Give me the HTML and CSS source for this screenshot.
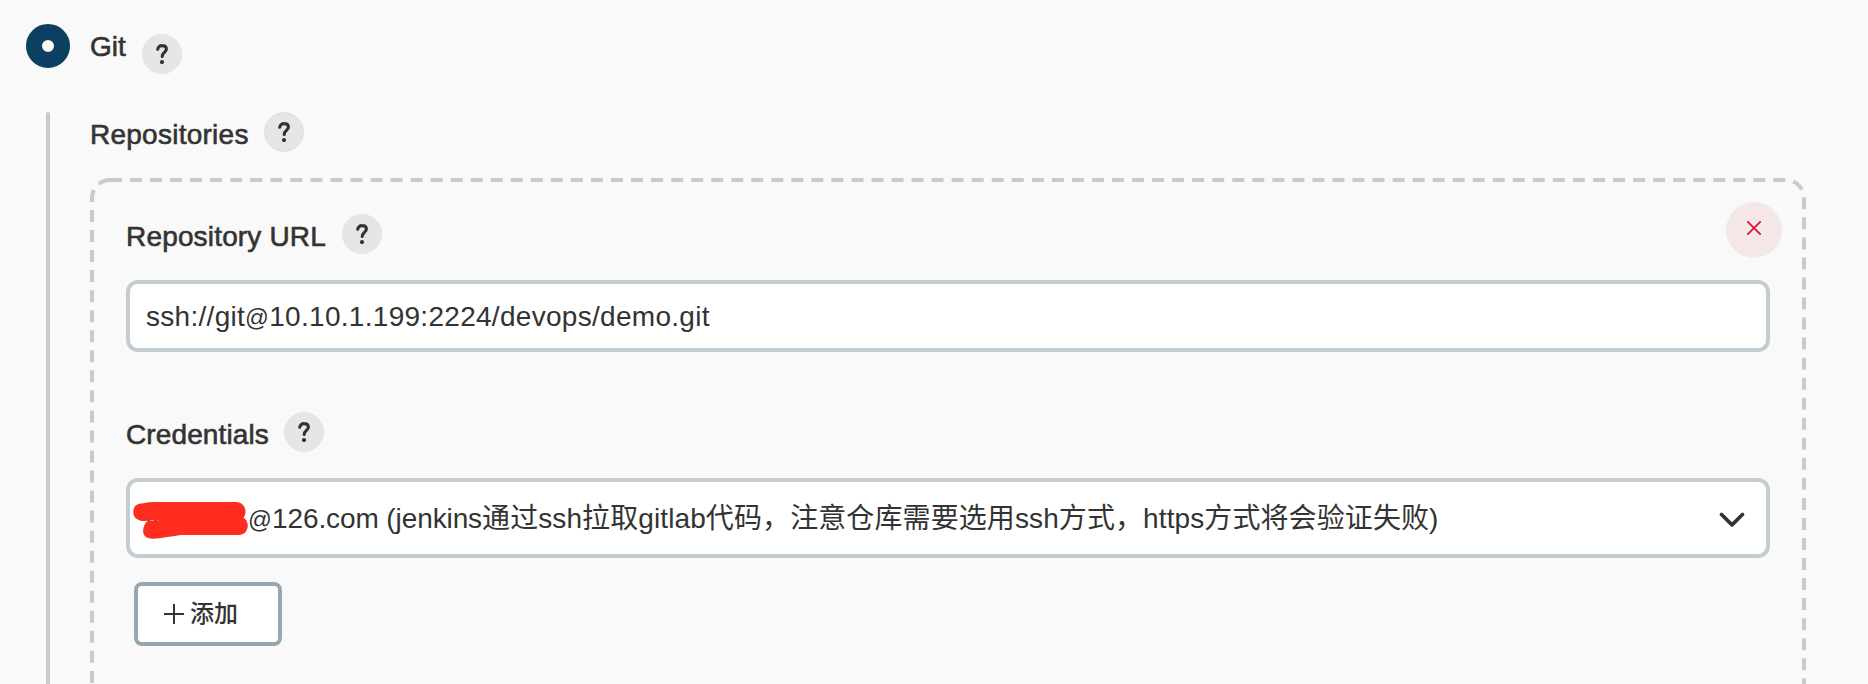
FILE: index.html
```html
<!DOCTYPE html>
<html lang="zh-CN">
<head>
<meta charset="utf-8">
<title>Git</title>
<link rel="stylesheet" href="styles.css">
</head>
<body>
<main class="scm">
  <div class="option">
    <span class="radio"></span>
    <span class="label label-git">Git</span>
    <span class="help help-git"><svg width="12" height="20" viewBox="0 0 12 20"><path class="hook" d="M1.7 5.3A4.3 4.1 0 0 1 6.1 1.6C8.7 1.6 10.4 3.1 10.4 5.3C10.4 8.3 6.2 8.7 6.2 12.4"/><circle cx="6" cy="18" r="2.1"/></svg></span>
  </div>
  <div class="nested">
    <div class="rail"></div>
    <div class="content">
      <div class="heading">
        <span class="label label-repos">Repositories</span>
        <span class="help"><svg width="12" height="20" viewBox="0 0 12 20"><path class="hook" d="M1.7 5.3A4.3 4.1 0 0 1 6.1 1.6C8.7 1.6 10.4 3.1 10.4 5.3C10.4 8.3 6.2 8.7 6.2 12.4"/><circle cx="6" cy="18" r="2.1"/></svg></span>
      </div>
      <section class="repo">
        <svg class="dashes" width="1716" height="520"><path d="M20 2H1696A18 18 0 0 1 1714 20V520"/><path d="M20 2A18 18 0 0 0 2 20V520"/></svg>
        <button class="remove"><svg width="16" height="16" viewBox="0 0 16 16"><path d="M1.3 1.3L14.7 14.7M14.7 1.3L1.3 14.7"/></svg></button>
        <div class="heading">
          <span class="label label-url">Repository URL</span>
          <span class="help"><svg width="12" height="20" viewBox="0 0 12 20"><path class="hook" d="M1.7 5.3A4.3 4.1 0 0 1 6.1 1.6C8.7 1.6 10.4 3.1 10.4 5.3C10.4 8.3 6.2 8.7 6.2 12.4"/><circle cx="6" cy="18" r="2.1"/></svg></span>
        </div>
        <div class="field"><span class="url">ssh://git<span class="at">@</span>10.10.1.199:2224/devops/demo.git</span></div>
        <div class="heading heading-cred">
          <span class="label label-cred">Credentials</span>
          <span class="help"><svg width="12" height="20" viewBox="0 0 12 20"><path class="hook" d="M1.7 5.3A4.3 4.1 0 0 1 6.1 1.6C8.7 1.6 10.4 3.1 10.4 5.3C10.4 8.3 6.2 8.7 6.2 12.4"/><circle cx="6" cy="18" r="2.1"/></svg></span>
        </div>
        <div class="field select">
          <svg class="scribble" width="115" height="40" viewBox="0 0 115 40"><path d="M9 1.5Q14 0 20 0H103C110 0 113 6 112.500 11Q112 14 110.500 15.500C114 18 115.500 22 114.500 26C113 31 110 33 105 33H48L28 36Q20 37 18 36.500C12 36 9 32 10.500 26Q11.500 21 15 18.500Q10 19.500 7 18.500C1 16.500 0 13 .4 8.500C1 4 4 1.500 9 1.500Z"/><path class="gap" d="M14.500 19Q19 17.600 27 18.300Q20 18.600 14.500 19Z"/><path class="speck" d="M15 18.500L17 17.800M21.500 18.300H23.500"/></svg>
          <span class="account"><span class="at">@</span><span class="domain">126.com (jenkins</span>通过ssh拉取gitlab代码，注意仓库需要选用ssh方式，https方式将会验证失败)</span>
          <svg class="chevron" width="26" height="16" viewBox="0 0 26 16"><path d="M2.500 2.500L13 12.900L23.500 2.500"/></svg>
        </div>
        <button class="add"><svg width="20" height="20" viewBox="0 0 20 20"><path d="M0 10H20M10 0V20"/></svg><span>添加</span></button>
      </section>
    </div>
  </div>
</main>
</body>
</html>
```
FILE: styles.css
```css
* { box-sizing: border-box; }
body {
  margin: 0;
  background: #f9f9f9;
  color: #333;
  font: 28px/40px "Liberation Sans", "Noto Sans CJK SC", sans-serif;
}
button { font: inherit; color: inherit; margin: 0; }
svg { display: block; flex: none; }
.scm { height: 684px; overflow: hidden; padding: 24px 0 0 26px; }
.option { display: flex; align-items: flex-start; height: 88px; }
.radio {
  width: 44px; height: 44px; border-radius: 50%;
  border: 16px solid #0b4060; background: #f9f9f9;
}
.label { white-space: nowrap; -webkit-text-stroke: 0.6px #333; padding-top: 3px; }
.label-git { width: 51px; margin-left: 20px; }
.help {
  display: flex; align-items: center; justify-content: center; flex: none;
  width: 40px; height: 40px; border-radius: 50%;
  background: #e6e6e6; border: 1px solid #e2e2e2;
}
.help-git { margin: 10px 0 0 1px; }
.help circle { fill: #333; }
.hook { fill: none; stroke: #333; stroke-width: 3.1; stroke-linecap: round; }
.nested { display: flex; padding-left: 20px; }
.rail { width: 4px; height: 580px; margin-right: 40px; background: #c3ccd1; border-radius: 2px 2px 0 0; }
.content { width: 1716px; }
.heading { display: flex; align-items: flex-start; height: 66px; }
.label-repos { width: 174px; letter-spacing: 0.25px; }
.label-url { width: 216px; letter-spacing: 0.17px; }
.label-cred { width: 158px; letter-spacing: 0.12px; }
.repo { position: relative; height: 520px; padding: 36px; }
.dashes { position: absolute; left: 0; top: 0; }
.dashes path { fill: none; stroke: #c3ccd1; stroke-width: 4; stroke-dasharray: 12 8.04; }
.remove {
  position: absolute; right: 24px; top: 24px; width: 56px; height: 56px;
  display: flex; justify-content: center; padding: 18px 0 0;
  border: 0; border-radius: 50%; background: #f5e7e8;
}
.remove path { stroke: #dc143c; stroke-width: 1.8; }
.field {
  display: flex; align-items: center; width: 1644px; height: 72px;
  border: 4px solid #c3ccd1; border-radius: 12px; background: #fff;
  padding-left: 16px; white-space: nowrap;
}
.url { padding-top: 2px; letter-spacing: 0.29px; }
.at { font-size: 23.5px; line-height: 1; }
.heading-cred { margin-top: 60px; }
.select { height: 80px; padding: 0 21px 0 4px; }
.scribble { margin: 8px 0 0 -1px; }
.scribble path { fill: #ff2d20; }
.scribble .gap { fill: #fff; }
.scribble .speck { fill: none; stroke: #333; stroke-width: 1; }
.account { flex: 1; padding-top: 2px; letter-spacing: 0.1px; }
.domain { letter-spacing: -0.1px; }
.add {
  display: flex; align-items: center; width: 148px; height: 64px;
  margin: 24px 0 0 8px; padding: 0 0 0 26px; gap: 6px;
  border: 4px solid #98a6ad; border-radius: 8px; background: #fff;
  font-size: 24px; font-weight: 500;
}
.add path { stroke: #333; stroke-width: 2; }
.chevron { margin-top: 3px; }
.chevron path { fill: none; stroke: #333; stroke-width: 3.6; stroke-linecap: round; stroke-linejoin: round; }
```
